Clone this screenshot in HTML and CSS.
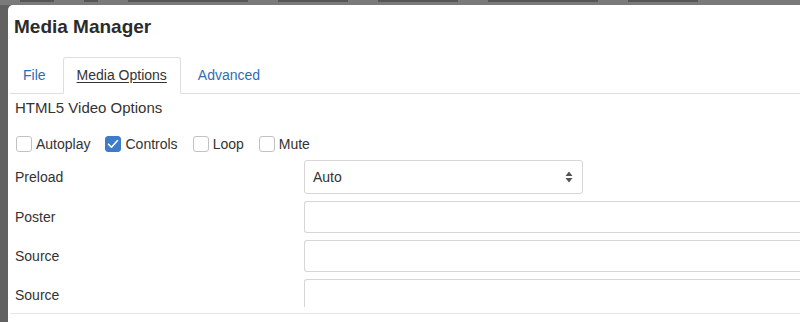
FILE: index.html
```html
<!DOCTYPE html>
<html>
<head>
    <title>Media Manager</title>
    <meta name="viewport" content="width=device-width, initial-scale=1.0">
    <link rel="stylesheet" href="styles.css">
</head>
<body>
    <!-- pagina por tras do modal (so aparece uma tira) -->
    <div class="backdrop">
        <div class="page-toolbar">
            <span class="blot" style="width: 34px"></span>
            <span class="blot" style="width: 14px"></span>
            <span class="blot" style="width: 120px"></span>
            <span class="blot" style="width: 70px"></span>
            <span class="blot" style="width: 80px"></span>
            <span class="blot" style="width: 110px"></span>
            <span class="blot" style="width: 70px"></span>
        </div>
    </div>

    <div class="modal">
        <h1 class="modal-title">Media Manager</h1>

        <ul class="tabs">
            <li class="tab">File</li>
            <li class="tab active">Media Options</li>
            <li class="tab">Advanced</li>
        </ul>

        <div class="modal-body">
            <h2 class="section-title">HTML5 Video Options</h2>

            <div class="check-row">
                <label class="check"><span class="box"></span>Autoplay</label>
                <label class="check"><span class="box checked">
                    <svg width="12" height="10" viewBox="0 0 12 10"><path d="M1.5 5.2 L4.5 8.2 L10.5 1.5" fill="none" stroke="#fff" stroke-width="1.6" stroke-linecap="round" stroke-linejoin="round"/></svg>
                </span>Controls</label>
                <label class="check"><span class="box"></span>Loop</label>
                <label class="check"><span class="box"></span>Mute</label>
            </div>

            <div class="form-row">
                <span class="form-label">Preload</span>
                <div class="select">
                    <span>Auto</span>
                    <svg width="8" height="12" viewBox="0 0 8 12"><path d="M4 0.5 L7.5 5 L0.5 5 Z M4 11.5 L7.5 7 L0.5 7 Z" fill="#555"/></svg>
                </div>
            </div>
            <div class="form-row">
                <span class="form-label">Poster</span>
                <div class="text-input"></div>
            </div>
            <div class="form-row">
                <span class="form-label">Source</span>
                <div class="text-input"></div>
            </div>
            <div class="form-row">
                <span class="form-label">Source</span>
                <div class="text-input"></div>
            </div>
        </div>
        <div class="modal-footer"></div>
    </div>
</body>
</html>
```

FILE: styles.css
```css
body {
    margin: 0;
    padding: 0;
    background-color: #616161;
    font-family: "Liberation Sans", Arial, sans-serif;
    color: #333;
    overflow: hidden;
    height: 322px;
}

.backdrop {
    position: absolute;
    top: 0;
    left: 0;
    right: 0;
    height: 322px;
}

.page-toolbar {
    padding-left: 20px;
    display: flex;
    align-items: flex-start;
    gap: 30px;
    background-color: #7a7a7a;
    height: 5px;
}

.blot {
    display: block;
    height: 2px;
    background-color: #2a2a2a;
    opacity: 0.45;
}

.modal {
    position: absolute;
    top: 5px;
    left: 8px;
    width: 830px;
    height: 330px;
    background-color: #fff;
    border-radius: 5px 0 0 0;
}

.modal-title {
    margin: 0;
    padding: 11px 0 0 6px;
    font-size: 19px;
    line-height: 22px;
    font-weight: bold;
    color: #2b2b2b;
}

.tabs {
    list-style: none;
    margin: 19px 0 0 2px;
    padding: 0;
    display: flex;
    border-bottom: 1px solid #dedede;
    height: 36px;
}

.tab {
    padding: 0 13px;
    margin-right: 4px;
    line-height: 36px;
    font-size: 14px;
    color: #2f6db5;
}

.tab.active {
    padding: 0 13px;
    border: 1px solid #dedede;
    border-bottom-color: #fff;
    border-radius: 3px 3px 0 0;
    box-sizing: border-box;
    height: 37px;
    margin-bottom: -1px;
    line-height: 34px;
    color: #333;
    text-decoration: underline;
    text-underline-offset: 2px;
}

.modal-body {
    padding: 4px 0 0 7px;
    height: 209px;
    overflow: hidden;
}

.section-title {
    margin: 0;
    font-size: 15px;
    font-weight: normal;
    line-height: 20px;
    color: #333;
}

.check-row {
    display: flex;
    margin-top: 14px;
    height: 24px;
    align-items: center;
    gap: 15px;
    padding-left: 1px;
}

.check {
    display: flex;
    align-items: center;
    gap: 4px;
    font-size: 14px;
}

.box {
    width: 16px;
    height: 16px;
    border: 1px solid #c2c2c2;
    border-radius: 3px;
    box-sizing: border-box;
    display: flex;
    align-items: center;
    justify-content: center;
}

.box.checked {
    background-color: #3d7cc9;
    border-color: #3d7cc9;
}

.form-row {
    display: grid;
    grid-template-columns: 289px 1fr;
    align-items: center;
    margin-top: 7px;
}

.check-row + .form-row {
    margin-top: 4px;
}

.form-label {
    font-size: 14px;
    color: #333;
}

.select {
    width: 279px;
    height: 34px;
    box-sizing: border-box;
    border: 1px solid #d6d6d6;
    border-radius: 3px;
    display: flex;
    align-items: center;
    justify-content: space-between;
    padding: 0 9px 0 8px;
    font-size: 14px;
}

.text-input {
    height: 32px;
    box-sizing: border-box;
    border: 1px solid #d6d6d6;
    border-right: none;
    border-radius: 3px 0 0 3px;
}

.modal-footer {
    margin: 6px 0 0 2px;
    border-top: 1px solid #e6e6e6;
}
```
